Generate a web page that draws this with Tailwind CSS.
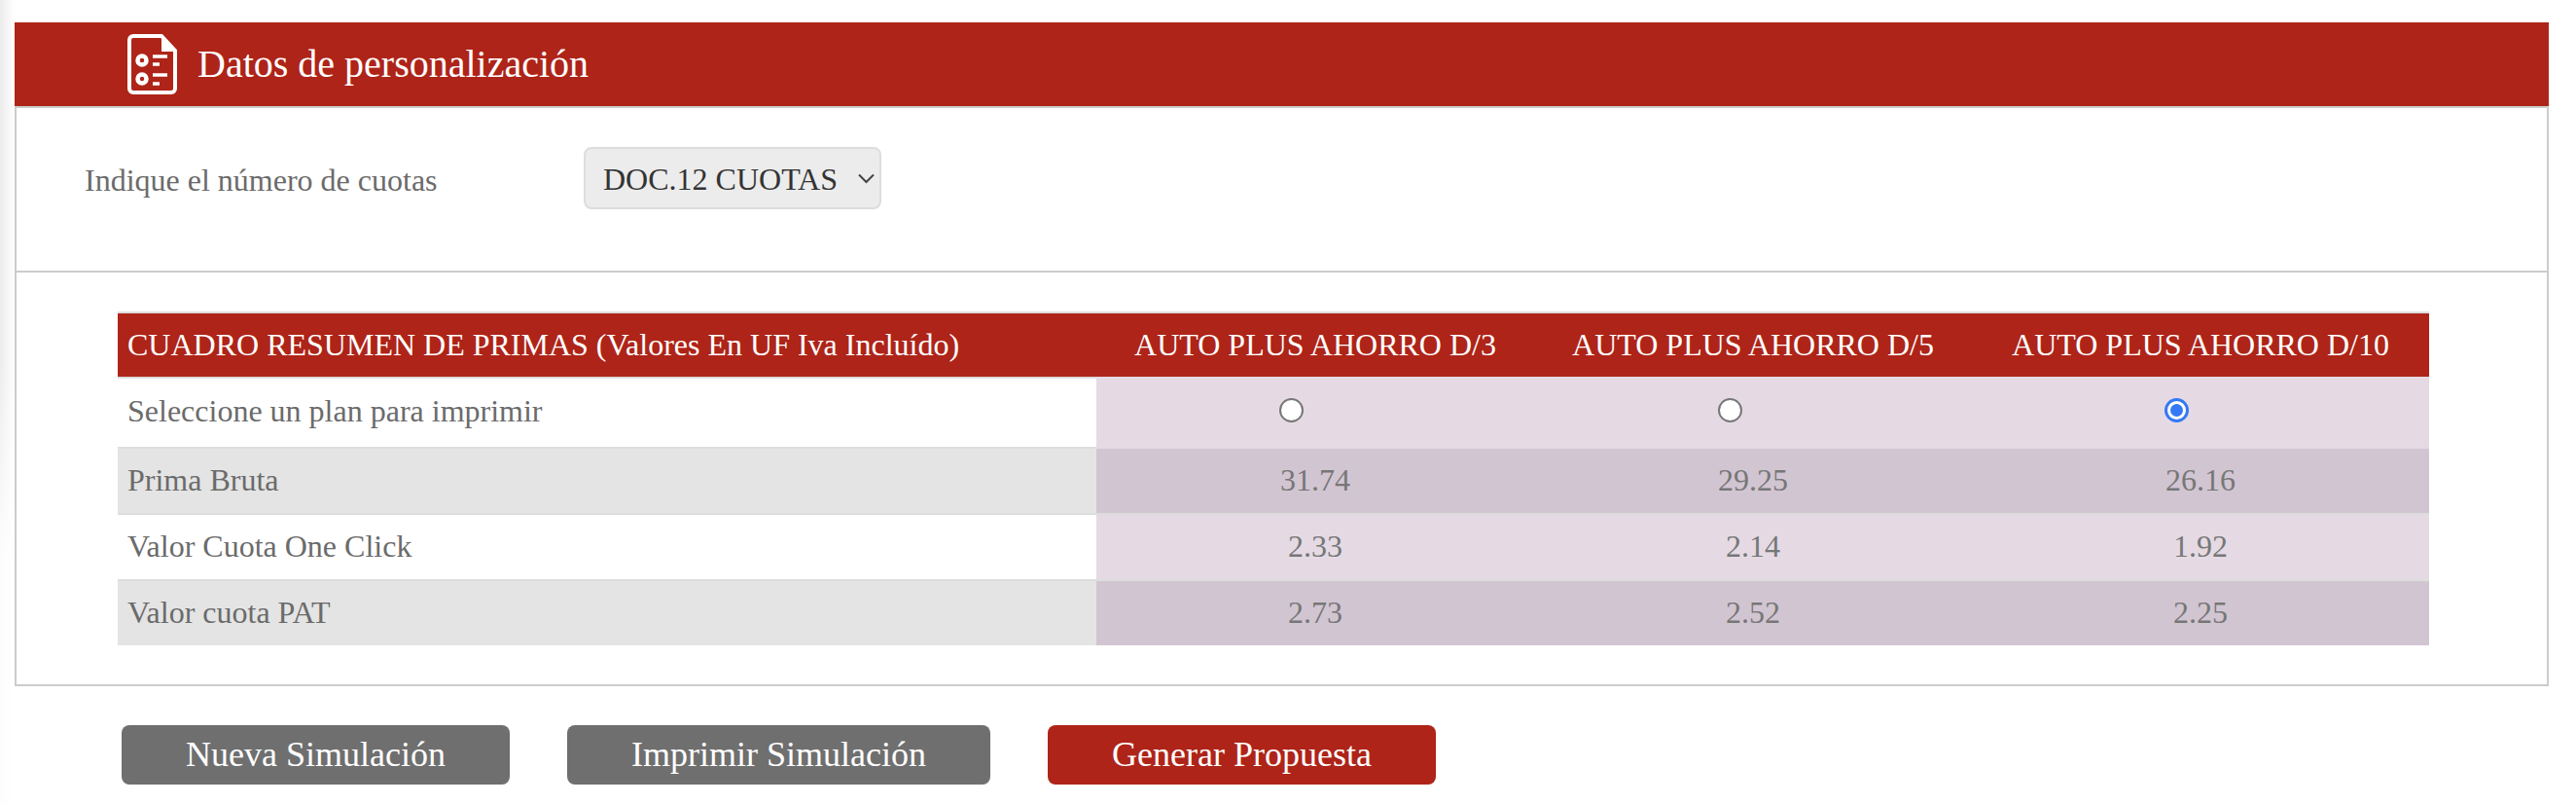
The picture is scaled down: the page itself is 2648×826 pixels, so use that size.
<!DOCTYPE html>
<html lang="es">
<head>
<meta charset="utf-8">
<script src="https://cdn.jsdelivr.net/npm/@tailwindcss/browser@4"></script>
</head>
<body class="bg-white font-['Liberation_Serif',serif] text-[#6b6b6b]">
<main class="relative w-[2648px] h-[826px] pt-[23px] pl-[15px] pr-[28px] overflow-hidden">
  <div class="absolute top-0 left-0 h-full w-[15px] bg-gradient-to-r from-[#ececec] to-white"><div class="w-full h-full bg-gradient-to-b from-transparent from-[45%] to-white/90 to-[70%]"></div></div>
  <header class="relative h-[88px] bg-[#ae2418] border-b-2 border-[#ccc] flex items-center pl-[116px] gap-[21px] text-white">
    <svg class="w-[51px] h-[62px]" viewBox="0 0 51 62" fill="none">
      <path d="M6 2h29l14 15v39a4 4 0 0 1-4 4H6a4 4 0 0 1-4-4V6a4 4 0 0 1 4-4z" stroke="#fff" stroke-width="4"/>
      <path d="M35 1v17h15z" fill="#fff"/>
      <circle cx="15" cy="27" r="4.5" stroke="#fff" stroke-width="4.5"/>
      <circle cx="15" cy="46" r="4.5" stroke="#fff" stroke-width="4.5"/>
      <path d="M26 23h15M26 31h7M26 42h15M26 51h7" stroke="#fff" stroke-width="3.5"/>
    </svg>
    <h1 class="text-[40px] leading-none font-normal">Datos de personalización</h1>
  </header>
  <section class="relative border-2 border-t-0 border-[#ccc]">
    <div class="h-[169px] border-b-2 border-[#ccc] flex items-start pl-[70px] pt-[40px]">
      <label class="w-[513px] text-[32px] leading-[64px] pt-[2px]">Indique el número de cuotas</label>
      <div class="w-[306px] h-[64px] bg-[#ececec] border-2 border-[#ddd] rounded-[8px] flex items-center pl-[18px] pt-[1px] text-[#333] text-[32px]">
        <span>DOC.12 CUOTAS</span>
        <svg class="ml-[21px] w-[17px] h-[11px]" viewBox="0 0 17 11" fill="none"><path d="M1 1.5l7.5 7.5L16 1.5" stroke="#444" stroke-width="2"/></svg>
      </div>
    </div>
    <div class="pl-[104px] pt-[40px] pb-[40px]">
      <div class="w-[2376px] border-t-2 border-[#ddd]">
        <div class="grid grid-cols-[1006px_450px_450px_470px] text-[32px] text-center">
          <div class="h-[65px] pb-[1px] bg-[#ae2418] text-white flex items-center pl-[10px] text-left">CUADRO RESUMEN DE PRIMAS (Valores En UF Iva Incluído)</div>
          <div class="h-[65px] pb-[1px] bg-[#ae2418] text-white flex items-center justify-center">AUTO PLUS AHORRO D/3</div>
          <div class="h-[65px] pb-[1px] bg-[#ae2418] text-white flex items-center justify-center">AUTO PLUS AHORRO D/5</div>
          <div class="h-[65px] pb-[1px] bg-[#ae2418] text-white flex items-center justify-center">AUTO PLUS AHORRO D/10</div>

          <div class="h-[74px] border-t-2 border-b-2 border-[#ddd] bg-white flex items-center pl-[10px] pb-[4px] text-left">Seleccione un plan para imprimir</div>
          <div class="h-[74px] border-t-2 border-b-2 border-[#e5dae4] bg-[#e5dae4] flex items-center justify-center pr-[50px] pb-[6px]"><span class="block w-[25px] h-[25px] rounded-full bg-white border-2 border-[#777]"></span></div>
          <div class="h-[74px] border-t-2 border-b-2 border-[#e5dae4] bg-[#e5dae4] flex items-center justify-center pr-[48px] pb-[6px]"><span class="block w-[25px] h-[25px] rounded-full bg-white border-2 border-[#777]"></span></div>
          <div class="h-[74px] border-t-2 border-b-2 border-[#e5dae4] bg-[#e5dae4] flex items-center justify-center pr-[50px] pb-[6px]"><span class="block w-[25px] h-[25px] rounded-full bg-white border-[3px] border-[#3478f6] p-[3px]"><span class="block w-full h-full rounded-full bg-[#3478f6]"></span></span></div>

          <div class="h-[66px] pb-[2px] bg-[#e4e4e4] flex items-center pl-[10px] text-left">Prima Bruta</div>
          <div class="h-[66px] pb-[2px] bg-[#d2c5d2] flex items-center justify-center text-[#777]">31.74</div>
          <div class="h-[66px] pb-[2px] bg-[#d2c5d2] flex items-center justify-center text-[#777]">29.25</div>
          <div class="h-[66px] pb-[2px] bg-[#d2c5d2] flex items-center justify-center text-[#777]">26.16</div>

          <div class="h-[70px] pb-[2px] border-t-2 border-b-2 border-[#ddd] bg-white flex items-center pl-[10px] text-left">Valor Cuota One Click</div>
          <div class="h-[70px] pb-[2px] border-t-2 border-b-2 border-[#ddd] bg-[#e5dae4] flex items-center justify-center text-[#777]">2.33</div>
          <div class="h-[70px] pb-[2px] border-t-2 border-b-2 border-[#ddd] bg-[#e5dae4] flex items-center justify-center text-[#777]">2.14</div>
          <div class="h-[70px] pb-[2px] border-t-2 border-b-2 border-[#ddd] bg-[#e5dae4] flex items-center justify-center text-[#777]">1.92</div>

          <div class="h-[66px] pb-[2px] bg-[#e4e4e4] flex items-center pl-[10px] text-left">Valor cuota PAT</div>
          <div class="h-[66px] pb-[2px] bg-[#d2c5d2] flex items-center justify-center text-[#777]">2.73</div>
          <div class="h-[66px] pb-[2px] bg-[#d2c5d2] flex items-center justify-center text-[#777]">2.52</div>
          <div class="h-[66px] pb-[2px] bg-[#d2c5d2] flex items-center justify-center text-[#777]">2.25</div>
        </div>
      </div>
    </div>
  </section>
  <div class="flex pl-[110px] pt-[40px] text-[36px] leading-none text-white">
    <button class="w-[399px] h-[61px] pb-[1px] rounded-[8px] bg-[#6f6f6f]">Nueva Simulación</button>
    <button class="ml-[59px] w-[435px] h-[61px] pb-[1px] rounded-[8px] bg-[#6f6f6f]">Imprimir Simulación</button>
    <button class="ml-[59px] w-[399px] h-[61px] pb-[1px] rounded-[8px] bg-[#ae2418]">Generar Propuesta</button>
  </div>
</main>
</body>
</html>
